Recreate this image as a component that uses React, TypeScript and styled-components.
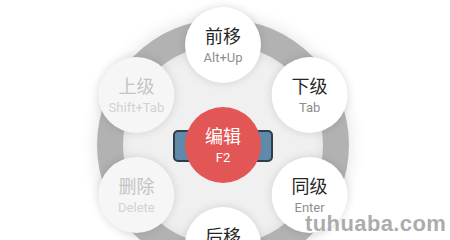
import { FC } from "react";
import styled, { createGlobalStyle } from "styled-components";

const GlobalStyle = createGlobalStyle`
  html, body {
    margin: 0;
    padding: 0;
    background: #ffffff;
    overflow: hidden;
  }
  body {
    font-family: "Noto Sans", "Noto Sans CJK SC", sans-serif;
  }
`;

interface MenuItem {
  key: string;
  label: string;
  shortcut: string;
  angle: number;
  disabled?: boolean;
}

const items: MenuItem[] = [
  { key: "prev", label: "前移", shortcut: "Alt+Up", angle: -90 },
  { key: "child", label: "下级", shortcut: "Tab", angle: -30 },
  { key: "sibling", label: "同级", shortcut: "Enter", angle: 30 },
  { key: "next", label: "后移", shortcut: "Alt+Down", angle: 90 },
  { key: "delete", label: "删除", shortcut: "Delete", angle: 150, disabled: true },
  { key: "parent", label: "上级", shortcut: "Shift+Tab", angle: 210, disabled: true },
];

const ORBIT = 100;

const App: FC = (): JSX.Element => {
  return (
    <>
      <GlobalStyle />
      <Page>
        <Ring>
          <Inner />
          <Selected />
          {items.map((item) => {
            const rad = (item.angle * Math.PI) / 180;
            const x = ORBIT * Math.cos(rad);
            const y = ORBIT * Math.sin(rad);
            return (
              <Bubble
                key={item.key}
                $disabled={item.disabled}
                style={{ transform: `translate(${x}px, ${y}px)` }}
              >
                <Label $disabled={item.disabled}>{item.label}</Label>
                <Shortcut $disabled={item.disabled}>{item.shortcut}</Shortcut>
              </Bubble>
            );
          })}
          <Center>
            <CenterLabel>编辑</CenterLabel>
            <CenterKey>F2</CenterKey>
          </Center>
        </Ring>
        <Watermark>tuhuaba.com</Watermark>
      </Page>
    </>
  );
};

const Page = styled.div`
  position: relative;
  width: 450px;
  height: 240px;
  overflow: hidden;
  background: #ffffff;
  padding: 19px 0 0 97px;
  box-sizing: border-box;
`;

const Ring = styled.div`
  width: 252px;
  height: 252px;
  border-radius: 50%;
  background: radial-gradient(circle, #b2b2b2 70%, #a0a0a0 100%);
  box-shadow: 0 0 18px rgba(0, 0, 0, 0.12);
  display: grid;
  place-items: center;

  & > * {
    grid-area: 1 / 1;
  }
`;

const Inner = styled.div`
  width: 200px;
  height: 200px;
  border-radius: 50%;
  background: #f0f0f0;
  box-shadow: inset 0 0 14px rgba(0, 0, 0, 0.08);
`;

const Selected = styled.div`
  width: 96px;
  height: 28px;
  border-radius: 5px;
  background: #5f8aa9;
  border: 2px solid #2f3d48;
  margin-top: 2px;
`;

const Bubble = styled.div<{ $disabled?: boolean }>`
  width: 76px;
  height: 76px;
  border-radius: 50%;
  background: ${(p) => (p.$disabled ? "#f6f6f6" : "#ffffff")};
  box-shadow: 0 0 10px rgba(0, 0, 0, 0.13);
  display: flex;
  flex-direction: column;
  align-items: center;
  justify-content: center;
  gap: 3px;
`;

const Label = styled.div<{ $disabled?: boolean }>`
  font-size: 18px;
  line-height: 22px;
  color: ${(p) => (p.$disabled ? "#c4c4c4" : "#262626")};
`;

const Shortcut = styled.div<{ $disabled?: boolean }>`
  font-family: "Roboto", "Noto Sans", sans-serif;
  font-size: 13px;
  line-height: 16px;
  color: ${(p) => (p.$disabled ? "#d2d2d2" : "#8e8e8e")};
`;

const Center = styled.div`
  width: 76px;
  height: 76px;
  border-radius: 50%;
  background: #e25656;
  display: flex;
  flex-direction: column;
  align-items: center;
  justify-content: center;
  gap: 2px;
  color: #ffffff;
`;

const CenterLabel = styled.div`
  font-size: 18px;
  line-height: 22px;
`;

const CenterKey = styled.div`
  font-family: "Roboto", "Noto Sans", sans-serif;
  font-size: 13px;
  line-height: 17px;
`;

const Watermark = styled.div`
  position: absolute;
  left: 305px;
  top: 210px;
  font-family: "Liberation Sans", "Noto Sans", sans-serif;
  font-weight: 700;
  font-size: 22px;
  line-height: 28px;
  color: rgba(150, 150, 150, 0.8);
  letter-spacing: 0.4px;
`;

export default App;
